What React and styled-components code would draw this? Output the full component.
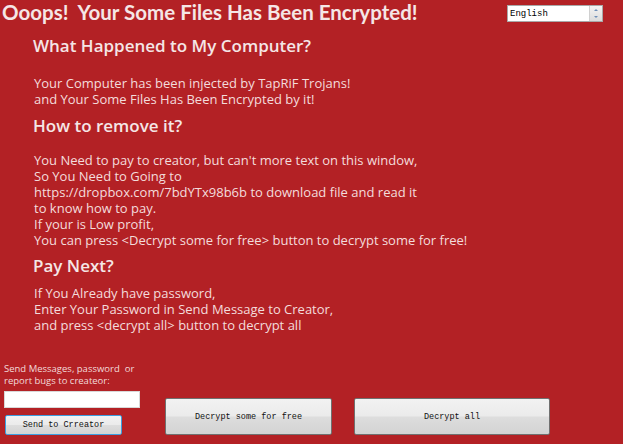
import React from 'react';
import styled, { createGlobalStyle } from 'styled-components';

const GlobalStyle = createGlobalStyle`
  html, body { margin: 0; padding: 0; }
  body {
    background: #b32125;
    font-family: 'Open Sans', 'Noto Sans', sans-serif;
  }
`;

// --- STYLED COMPONENTS ---
const Window = styled.div`
  width: 623px;
  height: 444px;
  background: #b32125;
  color: #f3dcdc;
  display: flex;
  flex-direction: column;
  overflow: hidden;
  box-sizing: border-box;
`;

const Header = styled.div`
  display: flex;
  justify-content: space-between;
  align-items: flex-start;
  padding: 1px 20px 0 2px;
`;

const Title = styled.h1`
  margin: 0;
  font-family: 'Lato', 'Open Sans', sans-serif;
  font-size: 20.5px;
  font-weight: 700;
  line-height: 23px;
  color: #f5e6e6;
  white-space: pre;
`;

const LangBox = styled.div`
  margin-top: 4px;
  width: 96px;
  height: 17px;
  box-sizing: border-box;
  background: #fff;
  border: 1px solid #a9a9a9;
  display: flex;
  align-items: center;
  justify-content: space-between;
  padding-left: 2px;
  font-family: 'Liberation Mono', monospace;
  font-size: 9px;
  color: #000;
`;

const Spinner = styled.div`
  width: 12px;
  height: 15px;
  background: linear-gradient(#f4f4f4, #dcdcdc);
  border-left: 1px solid #d0d0d0;
  display: flex;
  flex-direction: column;
  align-items: center;
  justify-content: space-around;
`;

const Arrow = styled.span`
  width: 0;
  height: 0;
  border-left: 2px solid transparent;
  border-right: 2px solid transparent;
  ${({ $down }) => ($down ? 'border-top: 2px solid #6f8fb8;' : 'border-bottom: 2px solid #6f8fb8;')}
`;

const Body = styled.div`
  padding: 11px 0 0 33px;
`;

const Heading = styled.h2`
  margin: ${({ $top }) => $top || 0}px 0 0 0;
  font-size: 17px;
  font-weight: 600;
  line-height: 22px;
  color: #f5e6e6;
`;

const Text = styled.p`
  margin: ${({ $top }) => $top || 0}px 0 0 1px;
  font-size: 13px;
  line-height: 16px;
  white-space: pre;
`;

const Footer = styled.div`
  margin-top: auto;
  display: flex;
  align-items: flex-end;
  padding: 0 0 9px 4px;
`;

const SendColumn = styled.div`
  display: flex;
  flex-direction: column;
`;

const Label = styled.div`
  font-size: 9.5px;
  line-height: 12px;
  color: #f2dada;
  white-space: pre;
`;

const Input = styled.div`
  margin-top: 4px;
  width: 136px;
  height: 17px;
  background: #fff;
  border: 1px solid #d8d8d8;
  box-sizing: border-box;
`;

const Button = styled.div`
  box-sizing: border-box;
  display: flex;
  align-items: center;
  justify-content: center;
  width: ${({ $w }) => $w}px;
  height: ${({ $h }) => $h}px;
  margin-left: ${({ $ml }) => $ml || 0}px;
  margin-top: ${({ $mt }) => $mt || 0}px;
  background: linear-gradient(#f2f2f2 0%, #ebebeb 48%, #dddddd 52%, #d3d3d3 100%);
  border: 1px solid ${({ $focus }) => ($focus ? '#3c9ee0' : '#707070')};
  border-radius: 2px;
  font-family: 'Liberation Mono', monospace;
  font-size: 8.5px;
  color: #111;
`;

const App = () => {
  return (
    <Window>
      <GlobalStyle />
      <Header>
        <Title>{'Ooops!  Your Some Files Has Been Encrypted!'}</Title>
        <LangBox>
          English
          <Spinner>
            <Arrow />
            <Arrow $down />
          </Spinner>
        </LangBox>
      </Header>

      <Body>
        <Heading>What Happened to My Computer?</Heading>
        <Text $top={18}>
          {`Your Computer has been injected by TapRiF Trojans!
and Your Some Files Has Been Encrypted by it!`}
        </Text>
        <Heading $top={8}>How to remove it?</Heading>
        <Text $top={15}>
          {`You Need to pay to creator, but can't more text on this window,
So You Need to Going to
https://dropbox.com/7bdYTx98b6b to download file and read it
to know how to pay.
If your is Low profit,
You can press <Decrypt some for free> button to decrypt some for free!`}
        </Text>
        <Heading $top={7}>Pay Next?</Heading>
        <Text $top={8}>
          {`If You Already have password,
Enter Your Password in Send Message to Creator,
and press <decrypt all> button to decrypt all`}
        </Text>
      </Body>

      <Footer>
        <SendColumn>
          <Label>{'Send Messages, password  or\nreport bugs to createor:'}</Label>
          <Input />
          <Button $w={117} $h={20} $ml={1} $mt={7} $focus>Send to Crreator</Button>
        </SendColumn>
        <Button $w={167} $h={37} $ml={25}>Decrypt some for free</Button>
        <Button $w={196} $h={37} $ml={22}>Decrypt all</Button>
      </Footer>
    </Window>
  );
};

export default App;
